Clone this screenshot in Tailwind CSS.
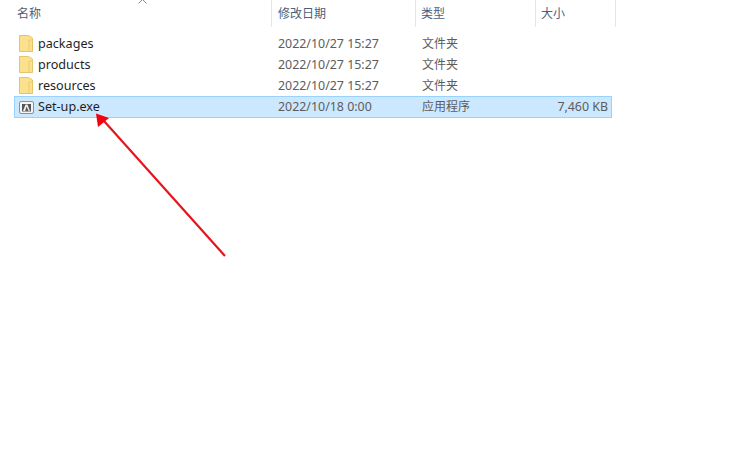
<!doctype html>
<html>
<head>
<meta charset="utf-8">
<script src="https://cdn.jsdelivr.net/npm/@tailwindcss/browser@4"></script>
</head>
<body class="bg-white">
<div class="relative w-[738px] h-[476px] overflow-hidden bg-white text-[12px] leading-[21px] text-[#5c5c5c] font-['Noto_Sans','Noto_Sans_CJK_SC',sans-serif]">
  <span class="absolute left-[138px] top-[-1px]">
    <svg width="9" height="5" viewBox="0 0 9 5" class="block"><path d="M0.5 4.5L4.5 0.5L8.5 4.5" fill="none" stroke="#8a8a8a"/></svg>
  </span>
  <div class="flex h-[27px] w-[616px] text-[#4c607a]">
    <div class="w-[272px] pl-[17px] pt-[3px] border-r border-[#e5e5e5]">名称</div>
    <div class="w-[144px] pl-[6px] pt-[3px] border-r border-[#e5e5e5]">修改日期</div>
    <div class="w-[120px] pl-[5px] pt-[3px] border-r border-[#e5e5e5]">类型</div>
    <div class="w-[80px] pl-[5px] pt-[3px] border-r border-[#e5e5e5]">大小</div>
  </div>
  <div class="flex flex-col w-[598px] ml-[14px] mt-[6px]">
    <div class="flex h-[21px] items-center">
      <div class="w-[24px] pl-[5px]"><svg width="14" height="17" viewBox="0 0 14 17" class="block"><path d="M0.5 0.5H9.5L13.5 3V16.5H0.5Z" fill="#fbe08e" stroke="#e3c56d"/><path d="M10 16V5H13" fill="none" stroke="#eacb76"/></svg></div>
      <div class="w-[240px] text-[12.6px] text-[#1f1f1f]">packages</div>
      <div class="w-[144px] text-[12.4px]">2022/10/27 15:27</div>
      <div class="w-[120px]">文件夹</div>
    </div>
    <div class="flex h-[21px] items-center">
      <div class="w-[24px] pl-[5px]"><svg width="14" height="17" viewBox="0 0 14 17" class="block"><path d="M0.5 0.5H9.5L13.5 3V16.5H0.5Z" fill="#fbe08e" stroke="#e3c56d"/><path d="M10 16V5H13" fill="none" stroke="#eacb76"/></svg></div>
      <div class="w-[240px] text-[12.6px] text-[#1f1f1f]">products</div>
      <div class="w-[144px] text-[12.4px]">2022/10/27 15:27</div>
      <div class="w-[120px]">文件夹</div>
    </div>
    <div class="flex h-[21px] items-center">
      <div class="w-[24px] pl-[5px]"><svg width="14" height="17" viewBox="0 0 14 17" class="block"><path d="M0.5 0.5H9.5L13.5 3V16.5H0.5Z" fill="#fbe08e" stroke="#e3c56d"/><path d="M10 16V5H13" fill="none" stroke="#eacb76"/></svg></div>
      <div class="w-[240px] text-[12.6px] text-[#1f1f1f]">resources</div>
      <div class="w-[144px] text-[12.4px]">2022/10/27 15:27</div>
      <div class="w-[120px]">文件夹</div>
    </div>
    <div class="flex h-[22px] items-center bg-[#cce8ff] border border-[#99d1ff]">
      <div class="w-[23px] pl-[4px]"><svg width="15" height="13" viewBox="0 0 15 13" class="block"><rect x="0.5" y="0.5" width="14" height="12" rx="1.5" fill="#f4f4f4" stroke="#8f8f8f"/><rect x="3" y="3" width="9" height="7.5" fill="#555555"/><path d="M4 10L6.6 3.5H8.4L11 10H9.6L7.5 5.5L6.2 10Z" fill="#f0f0f0"/></svg></div>
      <div class="w-[240px] -mt-[2px] text-[12.6px] text-[#1f1f1f]">Set-up.exe</div>
      <div class="w-[144px] -mt-[2px] text-[12.4px]">2022/10/18 0:00</div>
      <div class="w-[110px] -mt-[2px]">应用程序</div>
      <div class="w-[76px] -mt-[2px] text-[12.4px] text-right">7,460 KB</div>
    </div>
  </div>
  <svg class="absolute left-0 top-0" width="738" height="476" viewBox="0 0 738 476">
    <path d="M225 256L104 121" stroke="#e8141c" stroke-width="2.2" fill="none"/>
    <path d="M96 113.5L109 118L98 127Z" fill="#f5000f"/>
  </svg>
</div>
</body>
</html>
